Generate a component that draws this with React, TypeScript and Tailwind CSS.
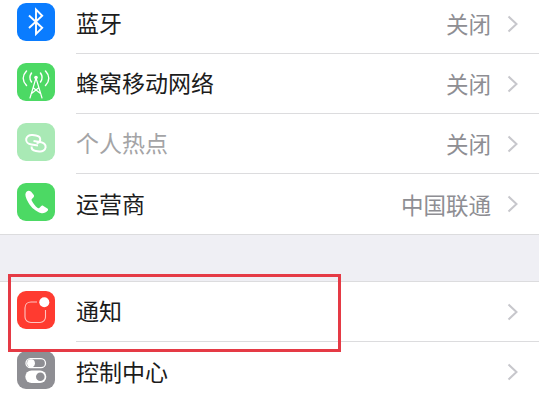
import type { ReactNode } from "react";

function Bluetooth() {
  return (
    <svg viewBox="0 0 38 38" className="w-full h-full" fill="none" stroke="white" strokeWidth="1.9">
      <path d="M12 12.5 L25.2 24.8 L19 31 V6.5 L25.2 12.8 L12 25" />
    </svg>
  );
}

function Cellular() {
  return (
    <svg viewBox="0 0 38 38" className="w-full h-full" fill="none" stroke="white" strokeWidth="1.2" strokeLinecap="round">
      <path d="M19 15 L13 35 M19 15 L25 35 M16.5 25 L23.5 30.5 M21.5 25 L14.5 30.5" />
      <circle cx="19" cy="14.5" r="1.8" fill="white" stroke="none" />
      <path d="M14.5 10 C12.4 13 12.4 16 14.5 19 M23.5 10 C25.6 13 25.6 16 23.5 19" strokeWidth="1.5" />
      <path d="M9.5 8 C5.2 12.5 5.2 18 9.5 22.5 M28.5 8 C32.8 12.5 32.8 18 28.5 22.5" strokeWidth="1.5" />
    </svg>
  );
}

function Hotspot() {
  return (
    <svg viewBox="0 0 38 38" className="w-full h-full" fill="none" stroke="white" strokeWidth="2">
      <path d="M21 22.5 L14.5 21.5 C11 21 8.8 18.8 9.2 16 C9.6 13.4 12.4 11.6 15.6 12.1 L19 12.6 C21.6 13 23.4 14.8 23.2 17 C23 18.8 21.4 20 19.6 20" />
      <path d="M16.5 18 L23 19 C26.6 19.5 29 21.6 28.6 24.4 C28.2 27 25.4 28.9 22.2 28.4 L18.8 27.9 C16.2 27.5 14.4 25.7 14.6 23.5" />
    </svg>
  );
}

function Phone() {
  return (
    <svg viewBox="0 0 38 38" className="w-full h-full" fill="white">
      <path d="M12.4 8 C11.2 7.4 9.6 8.4 8.8 9.8 C7.8 11.6 8.6 15 11.3 19.6 C14.4 25 19.4 29 23.8 30 C26.4 30.6 29 29.6 30.6 27.8 C31.4 26.8 31.2 26 30.4 25.4 L26.4 23 C25.5 22.4 24.7 22.5 24 23.3 L22.6 24.8 C22 25.4 21.4 25.4 20.7 24.9 C18.2 23 16 20.2 14.7 17.4 C14.4 16.7 14.5 16.2 15.1 15.7 L16.4 14.5 C17.2 13.8 17.3 13 16.8 12.1 L14.2 8.8 C13.7 8.2 13 8.2 12.4 8 Z" />
    </svg>
  );
}

function Notifications() {
  return (
    <svg viewBox="0 0 38 38" className="w-full h-full" fill="none">
      <path d="M20 11 H14 C10.5 11 8 13.5 8 17 V26 C8 29 10.5 31.5 14 31.5 H23 C26 31.5 28.5 29 28.5 26 V19" stroke="white" strokeOpacity="0.7" strokeWidth="1.1" />
      <circle cx="27.3" cy="11.3" r="5" fill="white" />
    </svg>
  );
}

function Switches() {
  return (
    <svg viewBox="0 0 38 38" className="w-full h-full">
      <rect x="9" y="7.7" width="19.5" height="9" rx="4.5" fill="none" stroke="white" strokeWidth="1.3" />
      <circle cx="14" cy="12.2" r="3.9" fill="white" />
      <rect x="8.3" y="19.5" width="21" height="12.5" rx="6.25" fill="white" />
      <circle cx="23.3" cy="25.75" r="4.3" fill="#8e8e93" />
    </svg>
  );
}

function Chevron() {
  return (
    <svg viewBox="0 0 12 18" className="w-3 h-[18px] shrink-0" fill="none" stroke="#c7c7cc" strokeWidth="2">
      <path d="M1.5 1.5 L9.5 9 L1.5 16.5" />
    </svg>
  );
}

function Row({ icon, color, label, value, dim, last }: { icon: ReactNode; color: string; label: string; value?: string; dim?: boolean; last?: boolean }) {
  return (
    <div className="h-[60px] flex items-stretch bg-white">
      <div className="w-[76px] shrink-0 flex items-center pl-[17px] pb-1">
        <div className={`w-[38px] h-[38px] rounded-[9px] overflow-hidden ${color}`}>{icon}</div>
      </div>
      <div className={`flex-1 flex items-center pr-5 ${last ? "" : "border-b border-[#dcdcde]"}`}>
        <span className={`flex-1 pb-0.5 text-[23px] leading-none ${dim ? "text-[#a4a4a6]" : "text-[#1c1c1c]"}`}>{label}</span>
        {value && <span className="text-[22.5px] leading-none text-[#8e8e93] mr-4">{value}</span>}
        <Chevron />
      </div>
    </div>
  );
}

export default function App() {
  return (
    <div className="relative w-[539px] h-[400px] overflow-hidden bg-white font-['Noto_Sans_CJK_SC','Liberation_Sans',sans-serif]">
      <div className="-mt-1.5">
        <Row icon={<Bluetooth />} color="bg-[#0a7cff]" label="蓝牙" value="关闭" />
        <Row icon={<Cellular />} color="bg-[#4cd964]" label="蜂窝移动网络" value="关闭" />
        <Row icon={<Hotspot />} color="bg-[#a9e9b5]" label="个人热点" value="关闭" dim />
        <Row icon={<Phone />} color="bg-[#4cd964]" label="运营商" value="中国联通" last />
        <div className="h-12 bg-[#efeff4] border-y border-[#dcdcde]" />
        <Row icon={<Notifications />} color="bg-[#ff3b30]" label="通知" />
        <Row icon={<Switches />} color="bg-[#8e8e93]" label="控制中心" last />
      </div>
      <div className="absolute left-2 top-[274px] w-[333px] h-[78px] border-[3px] border-[#e53a45]" />
    </div>
  );
}
